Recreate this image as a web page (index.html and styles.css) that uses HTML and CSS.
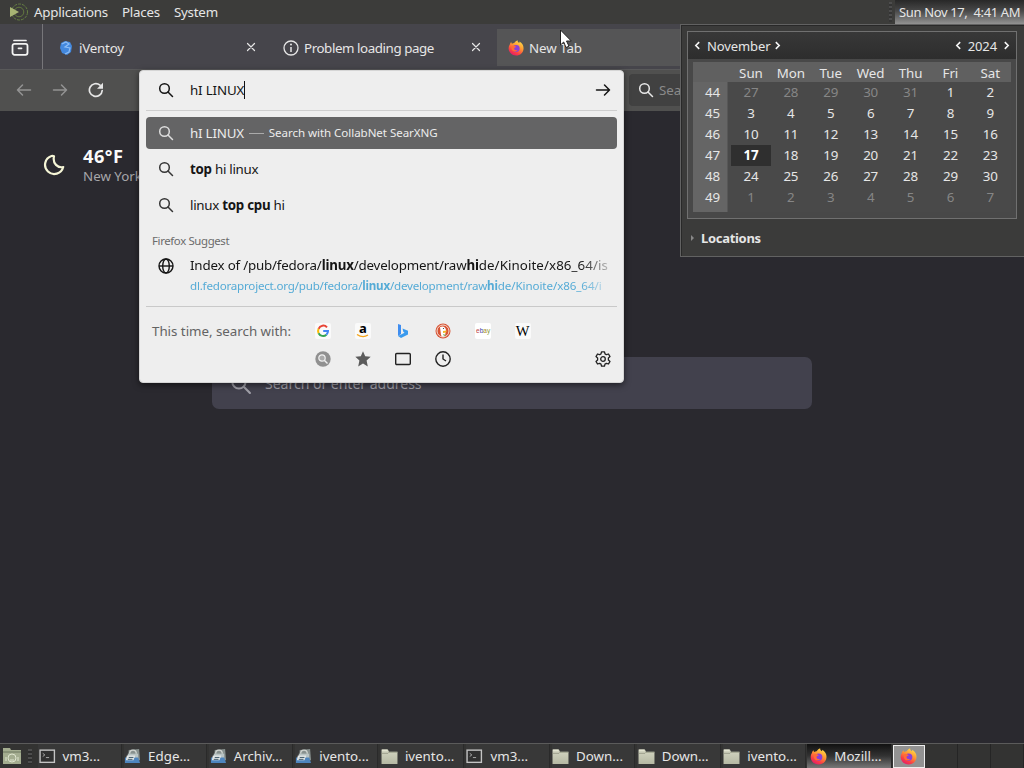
FILE: index.html
```html
<!DOCTYPE html>
<html lang="en">
<head>
<meta charset="utf-8">
<title>New Tab</title>
<link rel="stylesheet" href="styles.css">
</head>
<body>
<svg class="defs" aria-hidden="true">
  <defs>
    <linearGradient id="flame" x1="0.8" y1="0" x2="0.25" y2="1"><stop offset="0" stop-color="#ffe54a"/><stop offset=".4" stop-color="#ff9a32"/><stop offset=".75" stop-color="#fb3e43"/><stop offset="1" stop-color="#df1872"/></linearGradient>
    <linearGradient id="paper" x1="0" y1="0" x2="0" y2="1"><stop offset="0" stop-color="#d4d6c2"/><stop offset="1" stop-color="#b6b9a4"/></linearGradient>
    <symbol id="search" viewBox="0 0 16 16"><circle cx="6.5" cy="6.5" r="4.8" fill="none" stroke="currentColor" stroke-width="1.5"/><path d="M10 10l4.500 4.500" stroke="currentColor" stroke-width="1.5" stroke-linecap="round"/></symbol>
    <symbol id="close" viewBox="0 0 16 16"><path d="M4.500 3.500l7 7M11.500 3.500l-7 7" stroke="currentColor" stroke-width="1.2" stroke-linecap="round"/></symbol>
    <symbol id="arrow" viewBox="0 0 16 16"><path d="M1.5 8h13M9.5 3l5 5-5 5" fill="none" stroke="currentColor" stroke-width="1.5" stroke-linecap="round" stroke-linejoin="round"/></symbol>
    <symbol id="firefox" viewBox="0 0 18 18"><path d="M2 5.2C2.4 3.8 3 3 3.6 2.3c.1.9.4 1.4.9 1.9C5.3 3.7 6.2 3.5 7 3.5 8.2 1.8 9.4.8 10.8.3c-.2 1.5.7 2.3 1.9 3.2.2-.6.2-1.1.1-1.7C15.800 3.300 17.500 6 17.500 9.200c0 4.700-3.700 8.300-8.400 8.300S.7 13.900.7 9.400c0-1.600.5-3 1.300-4.200z" fill="url(#flame)"/><circle cx="9.200" cy="9.600" r="3.900" fill="#8a40d8"/><path d="M4.500 6.700c2-.8 3.900.1 4.900 1.200-1.200.3-2.400.7-2.500 1.800 0 1.700 2 2.400 3.800 1.600-.8 2-4.100 2.500-5.700.5-1.200-1.400-1.300-3.600-.5-5.100z" fill="#ff6b38"/></symbol>
    <symbol id="folder" viewBox="0 0 16 16"><path d="M.5 1.500h6l1 2h8v11.500H.5z" fill="url(#paper)"/><path d="M.5 5h6l1-1h8" fill="none" stroke="#8b8e7b" stroke-width=".7"/><path d="M1 2h5" stroke="#ecedda"/></symbol>
    <symbol id="terminal" viewBox="0 0 16 14"><rect x="1" y="1" width="13.500" height="11.500" fill="#303030" stroke="#c4c4c4" stroke-width="1.300"/><path d="M3.500 4l2 1.500-2 1.500M6.500 8h3" fill="none" stroke="#aaa" stroke-width=".9"/></symbol>
    <symbol id="machine" viewBox="0 0 18 18"><path d="M5 2l11-1 1 12-13 1z" fill="#87908e"/><path d="M6 6c0-5 7-5 7 0" fill="none" stroke="#d0d4d0" stroke-width="1.500"/><rect x="4" y="6" width="11" height="5" fill="#b8c3c3"/><path d="M1 10h14l2 6H1z" fill="#4e85be"/><path d="M3 8h9l-2 5H2z" fill="#e3e8e8"/><path d="M5 10h5M4 12h5" stroke="#395363"/></symbol>
  </defs>
</svg>
<div class="desktop">
  <header class="panel">
    <svg class="mint" viewBox="0 0 20 18"><circle cx="10.500" cy="9" r="8" fill="none" stroke="#668043" stroke-dasharray="3 1"/><circle cx="10" cy="9" r="4.800" fill="none" stroke="#63793f"/><path d="M1 4l9 5-9 5z" fill="#a8b574"/></svg>
    <span>Applications</span><span>Places</span><span>System</span>
    <i class="handle"></i>
    <div class="clock"><span>Sun Nov 17,&nbsp; 4:41 AM</span></div>
  </header>

  <nav class="tabs">
    <div class="view"><svg viewBox="0 0 18 18"><path d="M3 1.500h12" stroke="currentColor" stroke-width="1.700" stroke-linecap="round"/><rect x="1.500" y="4.800" width="15" height="11" rx="2" fill="none" stroke="currentColor" stroke-width="1.800"/><path d="M7.500 9.300h3" stroke="currentColor" stroke-width="1.800" stroke-linecap="round"/></svg></div>
    <div class="tab first"><svg viewBox="0 0 16 16"><path d="M3 3l4-2 5 1 2 4-1 6-4 3-5-2-2-5z" fill="#4388de"/><path d="M4 4l4-2 3 2-4 3 5 1-1 4-4 2" fill="none" stroke="#8dbdf5" stroke-width="1.200"/></svg><span>iVentoy</span><svg class="x"><use href="#close"/></svg></div>
    <div class="tab second"><svg viewBox="0 0 16 16"><circle cx="8" cy="8" r="7" fill="none" stroke="currentColor" stroke-width="1.300"/><path d="M8 7v5" stroke="currentColor" stroke-width="1.500"/><circle cx="8" cy="4.500" r="1" fill="currentColor"/></svg><span>Problem loading page</span><svg class="x"><use href="#close"/></svg></div>
    <div class="tab active"><svg><use href="#firefox"/></svg><span>New Tab</span></div>
  </nav>

  <div class="toolbar">
    <svg class="dim back"><use href="#arrow"/></svg><svg class="dim"><use href="#arrow"/></svg>
    <svg viewBox="0 0 16 16"><path d="M14.200 8.500A6.400 6.400 0 1 1 12 3.200" fill="none" stroke="currentColor" stroke-width="1.700" stroke-linecap="round"/><path d="M15 .8v6H9z" fill="currentColor"/></svg>
    <div class="searchbox"><svg><use href="#search"/></svg><span>Search</span></div>
  </div>

  <main class="content">
    <section class="weather">
      <svg viewBox="0 0 22 22"><path d="M8.500 2a9.200 9.200 0 1 0 11.700 11c-2.500.6-5.300-.2-7.200-2.100S10.300 5.500 11 2.300C10.300 1.900 9.300 1.800 8.500 2z" fill="none" stroke="#f5f5d6" stroke-width="2.200" stroke-linejoin="round"/></svg>
      <div><strong>46°F</strong><span>New York</span></div>
    </section>
    <div class="bigsearch"><svg><use href="#search"/></svg><span>Search or enter address</span></div>
  </main>

  <footer class="taskbar">
    <svg class="show" viewBox="0 0 20 18"><path d="M1 1h7l1 2h10v14H1z" fill="#a4ad90"/><path d="M1 5h18" stroke="#6d765f"/><circle cx="10" cy="11" r="4" fill="none" stroke="#dfe5cf"/><path d="M4 14v-4M16 14v-4M8 13h4" stroke="#dfe5cf"/></svg>
    <i class="grip"></i>
    <div class="tasks">
      <div><svg><use href="#terminal"/></svg>vm3...</div>
      <div><svg><use href="#machine"/></svg>Edge...</div>
      <div><svg><use href="#machine"/></svg>Archiv...</div>
      <div><svg><use href="#machine"/></svg>ivento...</div>
      <div><svg><use href="#folder"/></svg>ivento...</div>
      <div><svg><use href="#terminal"/></svg>vm3...</div>
      <div><svg><use href="#folder"/></svg>Down...</div>
      <div><svg><use href="#folder"/></svg>Down...</div>
      <div><svg><use href="#folder"/></svg>ivento...</div>
      <div class="current"><svg><use href="#firefox"/></svg>Mozill...</div>
    </div>
    <div class="workspace"><svg><use href="#firefox"/></svg></div>
    <i class="ws"></i><i class="ws"></i><i class="ws"></i>
  </footer>

  <section class="urlbar">
    <div class="input"><svg><use href="#search"/></svg><span class="typed">hI LINUX</span><svg class="go"><use href="#arrow"/></svg></div>
    <div class="results">
      <div class="row selected"><svg><use href="#search"/></svg><span class="query">hI LINUX</span><i></i><small>Search with CollabNet SearXNG</small></div>
      <div class="row"><svg><use href="#search"/></svg><span><b>top</b> hi linux</span></div>
      <div class="row"><svg><use href="#search"/></svg><span>linux <b>top cpu</b> hi</span></div>
      <div class="label">Firefox Suggest</div>
      <div class="link">
        <svg viewBox="0 0 16 16"><g fill="none" stroke="currentColor" stroke-width="1.400"><circle cx="8" cy="8" r="7"/><ellipse cx="8" cy="8" rx="3.300" ry="7"/><path d="M1 8h14"/></g></svg>
        <div><p>Index of /pub/fedora/<b>linux</b>/development/raw<b>hi</b><span class="tail">de/Kinoite/x86_64/is</span></p><p class="url">dl.fedoraproject.org/pub/fedora/<b>linux</b>/development/raw<b>hi</b><span class="tail">de/Kinoite/x86_64/i</span></p></div>
      </div>
    </div>
    <div class="engines">
      <span>This time, search with:</span>
      <div class="icons">
        <svg viewBox="0 0 16 16"><rect width="16" height="16" rx="2" fill="#fafafa"/><g fill="none" stroke-width="2"><path d="M12 4.300A5 5 0 0 0 3.600 5.800" stroke="#e84436"/><path d="M3.600 5.800a5 5 0 0 0 0 4.400" stroke="#f9bb07"/><path d="M3.600 10.200a5 5 0 0 0 7.800 1.500" stroke="#35a453"/><path d="M11.400 11.700A5 5 0 0 0 13 8H8.200" stroke="#4285f4"/></g></svg>
        <svg viewBox="0 0 16 16"><rect width="16" height="16" rx="2" fill="#fafafa"/><text x="4" y="10" class="amazon">a</text><path d="M2 11.500q6 4 11 .5" fill="none" stroke="#f5a51a" stroke-width="1.400"/></svg>
        <svg viewBox="0 0 16 16"><path d="M3 1l3 1v9l-3 2z" fill="#3f8df0"/><path d="M7.500 5.500l5.500 2.300v3.700L6 15l-3-2 6.500-3.200-1.200-1z" fill="#3a9aee"/></svg>
        <svg viewBox="0 0 16 16"><circle cx="8" cy="8" r="7.500" fill="#d85434"/><circle cx="8" cy="8" r="6" fill="none" stroke="#f4ded4"/><path d="M5 4q5-2 6 3l-1 6q-3 2-4-1z" fill="#fff"/><path d="M8 8l4-.5-1 2-3 .5z" fill="#f4b728"/><circle cx="8.500" cy="5.500" r=".6" fill="#234"/><path d="M8 11l3 1-2 1z" fill="#62a849"/></svg>
        <svg viewBox="0 0 16 16"><rect width="16" height="16" rx="2" fill="#fff"/><text x="1" y="10" class="ebay"><tspan fill="#b44">e</tspan><tspan fill="#34a">b</tspan><tspan fill="#a82">a</tspan><tspan fill="#893">y</tspan></text></svg>
        <svg viewBox="0 0 16 16"><rect width="16" height="16" rx="2" fill="#fafafa"/><text x=".7" y="12.800" class="wiki">W</text></svg>
        <svg viewBox="0 0 16 16"><circle cx="8" cy="8" r="7.700" fill="#909090"/><circle cx="7" cy="7" r="3.200" fill="#aaa" stroke="#f0f0f0" stroke-width="1.200"/><path d="M9.500 9.500l3 3" stroke="#f0f0f0" stroke-width="1.400"/></svg>
        <svg viewBox="0 0 16 16"><path d="M8 .3l2.200 5 5.500.5-4.100 3.700 1.200 5.900L8 12.500l-4.800 2.900 1.200-5.900L.3 5.800l5.500-.5z" fill="#5b5b5b"/></svg>
        <svg viewBox="0 0 16 16"><rect x=".7" y="2.500" width="14.600" height="11" rx="1" fill="none" stroke="currentColor" stroke-width="1.400"/></svg>
        <svg viewBox="0 0 16 16"><circle cx="8" cy="8" r="7.200" fill="none" stroke="currentColor" stroke-width="1.400"/><path d="M8 3.500V8l3 2" fill="none" stroke="currentColor" stroke-width="1.400"/></svg>
      </div>
      <svg class="gear" viewBox="0 0 16 16"><g fill="none" stroke="currentColor" stroke-width="1.300" stroke-linejoin="round"><path d="M6.500.8h3l.5 2.100 1.400.8 2.100-.7 1.500 2.600L13.400 7v2l1.600 1.400-1.500 2.600-2.100-.7-1.400.8-.5 2.100h-3L6 13.100l-1.400-.8-2.100.7L1 10.400 2.600 9V7L1 5.600 2.500 3l2.100.7L6 2.900z"/><circle cx="8" cy="8" r="2.300"/></g></svg>
    </div>
  </section>

  <aside class="calendar">
    <div class="frame">
      <div class="month"><svg viewBox="0 0 6 8"><path d="M4.500 1L1.500 4l3 3"/></svg><span>November</span><svg viewBox="0 0 6 8"><path d="M1.500 1l3 3-3 3"/></svg><svg class="year" viewBox="0 0 6 8"><path d="M4.500 1L1.500 4l3 3"/></svg><span>2024</span><svg class="next" viewBox="0 0 6 8"><path d="M1.500 1l3 3-3 3"/></svg></div>
      <div class="days">
        <div class="week names"><span></span><span>Sun</span><span>Mon</span><span>Tue</span><span>Wed</span><span>Thu</span><span>Fri</span><span>Sat</span></div>
        <div class="week"><span>44</span><em>27</em><em>28</em><em>29</em><em>30</em><em>31</em><span>1</span><span>2</span></div>
        <div class="week"><span>45</span><span>3</span><span>4</span><span>5</span><span>6</span><span>7</span><span>8</span><span>9</span></div>
        <div class="week"><span>46</span><span>10</span><span>11</span><span>12</span><span>13</span><span>14</span><span>15</span><span>16</span></div>
        <div class="week"><span>47</span><b>17</b><span>18</span><span>19</span><span>20</span><span>21</span><span>22</span><span>23</span></div>
        <div class="week"><span>48</span><span>24</span><span>25</span><span>26</span><span>27</span><span>28</span><span>29</span><span>30</span></div>
        <div class="week last"><span>49</span><em>1</em><em>2</em><em>3</em><em>4</em><em>5</em><em>6</em><em>7</em></div>
      </div>
    </div>
    <div class="locations"><i></i>Locations</div>
  </aside>
  <svg class="cursor" viewBox="0 0 14 20"><path d="M1.500 1v15l3.200-3 2.300 5.500 3-1.300-2.500-5.200h4.800z" fill="#fff" stroke="#222" stroke-width="1"/></svg>
</div>
</body>
</html>
```
FILE: styles.css
```css
* { box-sizing: border-box; }
body { margin: 0; font: 13.33px/18px "Noto Sans", sans-serif; color: #e6e6e6; background: #2a292f; overflow: hidden; }
p { margin: 0; }
svg { flex: none; width: 16px; height: 16px; display: block; }
.defs { position: absolute; width: 0; height: 0; }
.desktop { position: relative; width: 1024px; height: 768px; display: flex; flex-direction: column; overflow: hidden; white-space: nowrap; }

.panel { height: 24px; flex: none; display: flex; align-items: center; gap: 14px; padding-left: 9px; background: #3c3c3a; letter-spacing: -.22px; }
.panel .mint { width: 20px; height: 18px; margin-right: -9px; }
.handle { width: 3px; height: 20px; margin: 0 -11px 0 auto; background: repeating-linear-gradient(#4d4d4d 0 2px, #343434 2px 4px); }
.clock { width: 129px; height: 24px; padding: 3px 0 0 4px; background: linear-gradient(#282828, #484848 45%, #929292); font-size: 13px; letter-spacing: -.36px; }

.tabs { height: 45px; flex: none; display: flex; background: #46454b; }
.view { width: 43px; border-right: 1px solid #77767a; padding: 15px 0 0 11px; color: #f4f4f4; }
.view svg { width: 18px; height: 18px; }
.tab { display: flex; align-items: center; gap: 5px; padding-top: 2px; }
.tab .x { margin-left: auto; }
.first { width: 216px; padding-left: 15px; letter-spacing: -.2px; }
.second { width: 225px; padding-left: 24px; letter-spacing: -.42px; }
.tab.active { width: 196px; height: 37px; margin: 5px 0 0 13px; padding: 0 0 0 11px; background: #555556; letter-spacing: -.05px; }
.toolbar { height: 42px; flex: none; display: flex; align-items: center; gap: 20px; padding: 0 0 1px 16px; background: #50504f; border-top: 1px solid #59595a; }
.toolbar .dim { color: #939393; }
.back { transform: scaleX(-1); }
.searchbox { width: 210px; height: 32px; margin-left: 505px; display: flex; align-items: center; gap: 5px; padding-left: 9px; border-radius: 4px; background: #414141; color: #8a8a8a; }
.searchbox svg { color: #e8e8e8; }

.content { flex: 1; background: #2a292f; }
.weather { height: 246px; display: flex; padding: 34px 0 0 43px; }
.weather svg { width: 22px; height: 22px; margin: 9px 18px 0 0; }
.weather div { display: flex; flex-direction: column; }
.weather strong { font-size: 18.2px; line-height: 22px; letter-spacing: .5px; color: #fafafa; }
.weather span { font-size: 13.33px; line-height: 18px; color: #a6a6aa; }
.bigsearch { width: 600px; height: 52px; margin-left: 212px; display: flex; align-items: center; gap: 13px; padding: 1px 0 0 18px; border-radius: 7px; background: #42414d; color: #a1a0a9; font-size: 14.1px; letter-spacing: -.05px; }
.bigsearch svg { width: 22px; height: 22px; }

.urlbar { position: absolute; left: 139px; top: 70px; width: 485px; height: 313px; background: #eee; color: #151515; border: 1px solid #d5d5d5; border-radius: 4px; box-shadow: 0 2px 6px #0008; }
.input { height: 40px; margin: 0 6px; display: flex; align-items: center; border-bottom: 1px solid #cecece; padding: 0 6px 1px 12px; }
.typed { margin-left: 16px; border-right: 1px solid #111; line-height: 18px; letter-spacing: -.15px; }
.go { margin-left: auto; }
.results { height: 196px; margin: 0 6px; padding-top: 6px; border-bottom: 1px solid #c9c9c9; }
.row { display: flex; align-items: center; height: 32px; padding-left: 12px; margin-bottom: 4px; letter-spacing: -.27px; }
.row span { margin-left: 16px; }
.row svg { color: #353535; }
.row.selected { background: #646465; color: #ececec; border-radius: 4px; }
.selected svg { color: #ddd; }
.selected .query { letter-spacing: -.2px; }
.selected i { width: 15px; height: 1px; background: #aaa; margin: 1px 5px 0 5px; }
.selected small { font-size: 11.55px; letter-spacing: -.05px; }
.label { margin: 11px 0 0 6px; font-size: 11.4px; line-height: 18px; letter-spacing: -.36px; color: #6b6b6b; }
.link { display: flex; gap: 16px; padding: 5px 0 0 12px; }
.link > svg { margin-top: 3px; }
.link > div { line-height: 20.500px; width: 430px; -webkit-mask-image: linear-gradient(90deg, #000 390px, #0003 420px); mask-image: linear-gradient(90deg, #000 390px, #0003 420px); }
.link p { letter-spacing: -.18px; }
.link p .tail { letter-spacing: .08px; }
.link .url { font-size: 11.6px; letter-spacing: -.21px; color: #55abd6; }
.link .url .tail { letter-spacing: -.08px; }
.engines { display: flex; padding: 16px 12px 0; height: 75px; color: #222; }
.engines > span { width: 163px; margin-top: -1px; color: #636363; letter-spacing: -.02px; }
.icons { display: grid; grid-template-columns: repeat(6, 16px); grid-auto-rows: 16px; gap: 12px 24px; }
.gear { margin: 28px 0 0 auto; }
.icons svg { overflow: visible; }
.amazon { font: bold 13px "Noto Sans", sans-serif; }
.ebay { font: 6.5px "Liberation Sans", sans-serif; }
.wiki { font: 14.5px "Liberation Serif", serif; }

.calendar { position: absolute; left: 680px; top: 24px; width: 344px; height: 233px; padding: 6px 7px; background: #3b3b3a; border: 1px solid #626262; border-right: 0; box-shadow: inset 1px 1px #292929; }
.frame { width: 330px; height: 188px; margin-left: -1px; border: 1px solid #707070; background: #484848; }
.month { height: 27px; display: flex; align-items: center; padding: 0 6px; gap: 6px; background: linear-gradient(#383838, #2d2d2d); font-size: 13px; letter-spacing: -.1px; }
.month svg { width: 7px; height: 9px; fill: none; stroke: #f6f6f6; stroke-width: 1.4; }
.month span + svg { margin-left: -2px; }
.month .year { margin-left: auto; }
.month span + .next { margin-left: 0; }
.days { margin: 3px 0 0 5px; width: 318px; background: linear-gradient(90deg, #656565 34px, #494949 35px); text-align: center; letter-spacing: -.2px; }
.week { height: 21px; line-height: 21px; display: grid; grid-template-columns: 38px repeat(7, 39.9px); }
.week > :first-child { padding-left: 1px; }
.week.names { height: 20px; background: #606060; line-height: 23px; letter-spacing: -.05px; }
.last { height: 25px; }
.week em { font-style: normal; color: #868686; }
.week b { background: #2f2f2f; color: #fff; }
.locations { display: flex; align-items: center; gap: 7px; height: 38px; padding-left: 3px; font-size: 13px; font-weight: bold; letter-spacing: -.3px; }
.locations i { border-left: 3px solid #888; border-top: 3px solid transparent; border-bottom: 3px solid transparent; width: 3px; }
.cursor { position: absolute; left: 559px; top: 29px; width: 14px; height: 20px; }

.taskbar { height: 25px; flex: none; display: flex; align-items: center; border-top: 1px solid #5b5b5b; background: #333332; }
.show { width: 20px; height: 18px; margin-left: 2px; }
.grip { width: 4px; height: 15px; margin: 0 6px; background: repeating-linear-gradient(#4d4d4d 0 2px, #2c2c2c 2px 4px); }
.tasks { display: grid; grid-template-columns: repeat(10, 85.6px); margin-right: -1px; }
.tasks div { display: flex; align-items: center; height: 24px; margin-right: 2px; padding-left: .5px; gap: 7px; border-right: 1px solid #2a2a2a; background: #383838; }
.tasks svg { width: 17px; height: 17px; }
.tasks .current { margin-left: -1px; padding-left: 3px; background: linear-gradient(#111, #333 50%, #777); }
.workspace { width: 32px; height: 23px; display: grid; place-items: center; border: 1px solid #eee; background: #929292; }
.workspace svg { width: 17px; height: 17px; }
.ws { width: 33px; height: 24px; border-right: 1px solid #252525; }
```
